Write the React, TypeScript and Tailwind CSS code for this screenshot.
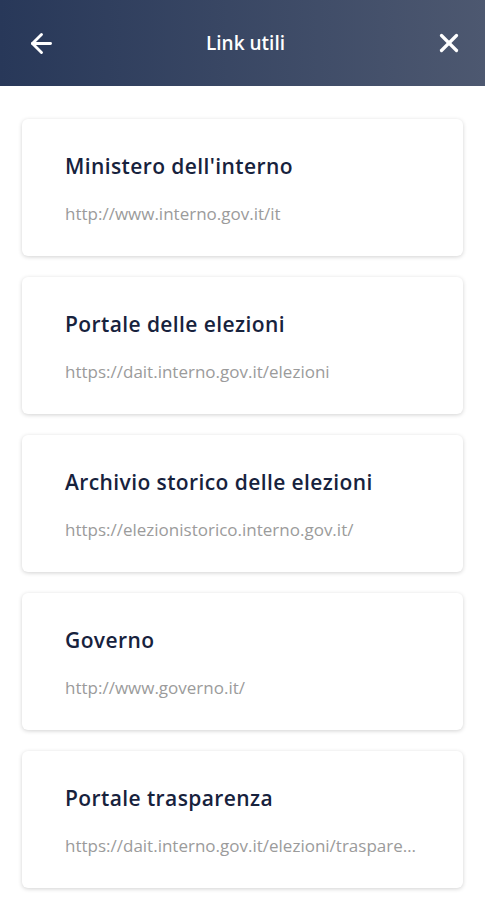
import { ArrowLeft, X } from "lucide-react";

const links = [
  { title: "Ministero dell'interno", url: "http://www.interno.gov.it/it" },
  { title: "Portale delle elezioni", url: "https://dait.interno.gov.it/elezioni" },
  { title: "Archivio storico delle elezioni", url: "https://elezionistorico.interno.gov.it/" },
  { title: "Governo", url: "http://www.governo.it/" },
  { title: "Portale trasparenza", url: "https://dait.interno.gov.it/elezioni/trasparenza" },
];

// card con titolo e indirizzo
function LinkCard({ title, url }: { title: string; url: string }) {
  return (
    <div className="bg-white rounded-md shadow-[0_1px_4px_rgba(0,0,0,0.18)] h-[137px] pl-[43px] pr-[44px] pt-[33px]">
      <p className="text-[21px] font-semibold text-[#17223d] leading-[28px] tracking-[0.4px]">{title}</p>
      <p className="mt-[22px] text-[17px] text-[#9b9b9b] leading-6 truncate">{url}</p>
    </div>
  );
}

export default function App() {
  return (
    <div className="w-[485px] h-[900px] bg-white overflow-hidden font-['Open_Sans',sans-serif]">
      <div className="h-[86px] bg-gradient-to-r from-[#283859] to-[#4d5870] flex items-center justify-between pl-[26px] pr-[21px] text-white">
        <ArrowLeft size={31} strokeWidth={2.2} />
        <span className="text-[19px] font-semibold">Link utili</span>
        <X size={30} strokeWidth={2.6} />
      </div>
      <div className="flex flex-col gap-[21px] px-[22px] pt-[33px]">
        {links.map((l) => (
          <LinkCard key={l.title} title={l.title} url={l.url} />
        ))}
      </div>
    </div>
  );
}
